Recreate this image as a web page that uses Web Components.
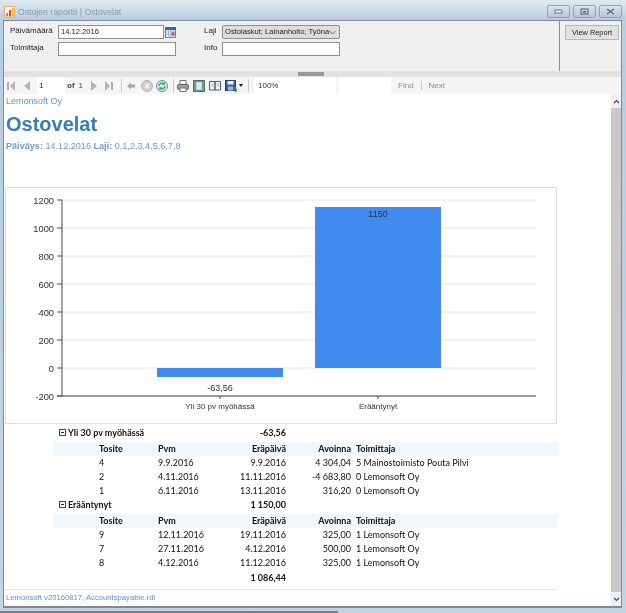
<!DOCTYPE html>
<html lang="fi">
<head>
<meta charset="utf-8">
<title>Ostojen raportit | Ostovelat</title>
<style>
  html, body { margin: 0; padding: 0; background: #c3d4e4; }
  body { width: 626px; height: 613px; overflow: hidden; font-family: "Liberation Sans", Arial, sans-serif; }
</style>
</head>
<body>
<app-window caption="Ostojen raportit | Ostovelat">
  <param-panel slot="params"></param-panel>
  <report-toolbar slot="toolbar"></report-toolbar>
  <report-page slot="content">
    <report-chart></report-chart>
    <report-group name="Yli 30 pv myöhässä" amount="-63,56">
      <report-row tosite="4" pvm="9.9.2016" era="9.9.2016" avoinna="4 304,04" toimittaja="5 Mainostoimisto Pouta Pilvi"></report-row>
      <report-row tosite="2" pvm="4.11.2016" era="11.11.2016" avoinna="-4 683,80" toimittaja="0 Lemonsoft Oy"></report-row>
      <report-row tosite="1" pvm="6.11.2016" era="13.11.2016" avoinna="316,20" toimittaja="0 Lemonsoft Oy"></report-row>
    </report-group>
    <report-group name="Erääntynyt" amount="1 150,00">
      <report-row tosite="9" pvm="12.11.2016" era="19.11.2016" avoinna="325,00" toimittaja="1 Lemonsoft Oy"></report-row>
      <report-row tosite="7" pvm="27.11.2016" era="4.12.2016" avoinna="500,00" toimittaja="1 Lemonsoft Oy"></report-row>
      <report-row tosite="8" pvm="4.12.2016" era="11.12.2016" avoinna="325,00" toimittaja="1 Lemonsoft Oy"></report-row>
    </report-group>
    <report-row total era="1 086,44"></report-row>
  </report-page>
</app-window>

<script>
// shared cell layout for the table rows, x positions follow the report columns
const ROW_GRID = `
  display: grid;
  box-sizing: border-box;
  grid-template-columns: 59px 60px 68px 65px 1fr;
  width: 505px;
  margin-left: 48px;
  padding-left: 46px;
  height: 14px;
  line-height: 14px;
  font-family: Lato, "Open Sans", sans-serif;
  font-size: 9px;
  color: #111;
  white-space: nowrap;
`;

class AppWindow extends HTMLElement {
  constructor() {
    super();
    this.attachShadow({ mode: "open" });
  }

  connectedCallback() {
    const caption = this.getAttribute("caption") || "";
    this.shadowRoot.innerHTML = `
      <style>
        :host { display: flex; flex-direction: column; width: 626px; height: 613px; background: linear-gradient(#dfe9f2, #b9cde0 20px, #c3d4e4); filter: blur(.3px); }
        .title { height: 20px; display: flex; align-items: flex-start; flex: none; }
        .icon { margin: 6px 0 0 4px; width: 11px; height: 12px; }
        .caption { margin: 7px 0 0 3px; font: 8.7px/11px "Liberation Sans", sans-serif; color: #8b9aa8; }
        .buttons { margin: 5px 4px 0 auto; display: flex; gap: 3px; }
        .buttons span { width: 21px; height: 11px; border: 1px solid #8fa3b6; border-radius: 2px; background: linear-gradient(#dbe6f0, #b4c6d8); display: flex; align-items: center; justify-content: center; }
        .frame { margin: 0 4px 0 3px; height: 588px; flex: none; display: flex; flex-direction: column; border: 1px solid #7f8a94; border-width: 1px 1px 2px 1px; background: #f0f0f0; box-sizing: border-box; }
        .split { height: 6px; flex: none; background: #e2e2e2; display: flex; justify-content: center; }
        .split i { display: block; width: 26px; height: 4px; margin: 1px 0 0 -4px; background: #9a9a9a; }
        .main { flex: 1; min-height: 0; display: flex; background: #fff; }
        .bar { width: 10px; flex: none; display: flex; flex-direction: column; background: #f0f0f0; }
        .arrow { height: 14px; flex: none; display: flex; align-items: center; justify-content: center; }
        .thumb { flex: 1; background: #c8c8c8; }
        .scrollpage { flex: 1; min-width: 0; }
        .task { margin-top: auto; width: 338px; height: 2px; background: #7b7f84; flex: none; }
      </style>
      <div class="title">
        <svg class="icon" viewBox="0 0 11 12">
          <rect x=".5" y=".5" width="10" height="11" fill="#fdf6ea" stroke="#e2b27a"/>
          <rect x="2" y="7" width="2" height="3.5" fill="#e8833a"/>
          <rect x="5" y="4" width="2" height="6.5" fill="#d9483b"/>
          <rect x="8" y="2" width="1.6" height="8.5" fill="#e6b422"/>
        </svg>
        <span class="caption">${caption}</span>
        <div class="buttons">
          <span><svg width="9" height="5"><rect x="1" y="1" width="7" height="3" fill="#eef3f8" stroke="#4b5b6a" stroke-width=".8"/></svg></span>
          <span><svg width="9" height="7"><rect x="1" y="1" width="7" height="5" fill="none" stroke="#4b5b6a"/><rect x="3" y="3" width="3" height="1.5" fill="#4b5b6a"/></svg></span>
          <span><svg width="9" height="7"><path d="M1 1l7 5M8 1L1 6" stroke="#5b6b7a" stroke-width="1.4"/></svg></span>
        </div>
      </div>
      <div class="frame">
        <slot name="params"></slot>
        <div class="split"><i></i></div>
        <slot name="toolbar"></slot>
        <div class="main">
          <div class="scrollpage"><slot name="content"></slot></div>
          <div class="bar">
            <div class="arrow"><svg width="7" height="5"><path d="M1 4l2.5-2.5L6 4" fill="none" stroke="#444" stroke-width="1.2"/></svg></div>
            <div class="thumb"></div>
            <div class="arrow"><svg width="7" height="5"><path d="M1 1l2.5 2.5L6 1" fill="none" stroke="#444" stroke-width="1.2"/></svg></div>
          </div>
        </div>
      </div>
      <div class="task"></div>
    `;
  }
}

class ParamPanel extends HTMLElement {
  constructor() {
    super();
    this.attachShadow({ mode: "open" });
  }

  connectedCallback() {
    this.shadowRoot.innerHTML = `
      <style>
        :host { display: flex; height: 50px; flex: none; background: #f0f0f0; font: 8px/12px "Liberation Sans", sans-serif; color: #222; }
        .fields { width: 556px; flex: none; box-sizing: border-box; padding: 4px 0 0 6px; display: grid; grid-template-columns: 48px 118px 28px 18px 118px; grid-template-rows: 14px 14px; row-gap: 3px; align-content: start; border-right: 1px solid #8d8d8d; }
        label { line-height: 11px; }
        .box { box-sizing: border-box; height: 14px; border: 1px solid #8e8e8e; background: #fff; padding-left: 2px; line-height: 12px; white-space: nowrap; overflow: hidden; font-size: 7.6px; }
        .date { display: flex; gap: 1px; align-items: center; }
        .date .box { width: 106px; flex: none; }
        .select { background: #dedede; border-radius: 2px; display: flex; align-items: center; justify-content: space-between; padding-right: 3px; }
        .select span { overflow: hidden; }
        .spacer { display: block; }
        .side { flex: 1; padding: 4px 0 0 5px; }
        .view { box-sizing: border-box; width: 54px; height: 15px; border: 1px solid #b5b5b5; background: #e2e2e2; text-align: center; line-height: 13px; font-size: 7.4px; }
      </style>
      <div class="fields">
        <label>Päivämäärä</label>
        <div class="date">
          <div class="box">14.12.2016</div>
          <svg width="11" height="11" viewBox="0 0 11 11">
            <rect x=".5" y=".5" width="10" height="10" fill="#e9eef6" stroke="#5f7fb5"/>
            <rect x="0" y="0" width="11" height="3" fill="#3b62a8"/>
            <path d="M1 5h9M1 7.500h9M3.500 3v8M6 3v8M8.500 3v8" stroke="#8fa6cf" stroke-width=".7"/>
            <rect x="6.500" y="5.500" width="3" height="3" fill="#d8463c"/>
          </svg>
        </div>
        <span class="spacer"></span>
        <label>Laji</label>
        <div class="box select"><span>Ostolaskut; Lainanhoito; Työna</span>
          <svg width="7" height="5" style="flex:none"><path d="M.5 1l3 3 3-3" fill="none" stroke="#666"/></svg>
        </div>
        <label>Toimittaja</label>
        <div class="box"></div>
        <span class="spacer"></span>
        <label>Info</label>
        <div class="box"></div>
      </div>
      <div class="side"><div class="view">View Report</div></div>
    `;
  }
}

class ReportToolbar extends HTMLElement {
  constructor() {
    super();
    this.attachShadow({ mode: "open" });
  }

  connectedCallback() {
    this.shadowRoot.innerHTML = `
      <style>
        :host { display: flex; align-items: center; height: 17px; flex: none; background: #f5f5f5; font: 8px/17px "Liberation Sans", sans-serif; color: #333; white-space: nowrap; padding-left: 2px; }
        svg { display: block; flex: none; }
        .page { width: 28px; height: 17px; background: #fff; padding-left: 2px; box-sizing: border-box; margin: 0 2px 0 7px; color: #222; }
        .sep { width: 1px; height: 13px; background: #c9c9c9; flex: none; }
        .zoom { width: 82px; height: 17px; box-sizing: border-box; background: #fff; padding-left: 4px; margin: 0 3px 0 5px; }
        .blank { width: 52px; height: 17px; background: #fff; }
        .link { color: #8a8a8a; }
      </style>
      <svg width="8" height="10" style="margin-left:1px"><rect x="0" y="1" width="2" height="8" fill="#b0b0b0"/><path d="M8 0v10L3 5z" fill="#b4b4b4"/></svg>
      <svg width="6" height="10" style="margin-left:9px"><path d="M6 0v10L0 5z" fill="#b4b4b4"/></svg>
      <div class="page">1</div>
      <b style="color:#444">of</b>
      <span style="margin-left:4px;color:#444">1</span>
      <svg width="6" height="10" style="margin-left:8px"><path d="M0 0v10l6-5z" fill="#b4b4b4"/></svg>
      <svg width="8" height="10" style="margin-left:8px"><path d="M0 0v10l5-5z" fill="#b4b4b4"/><rect x="6" y="1" width="2" height="8" fill="#b0b0b0"/></svg>
      <div class="sep" style="margin-left:8px"></div>
      <svg width="8" height="8" style="margin-left:5px"><path d="M0 4l4-3.500V2.500h4v3H4v2z" fill="#a9a9a9"/></svg>
      <svg width="12" height="12" style="margin-left:6px"><circle cx="6" cy="6" r="5.500" fill="#cfcfcf" stroke="#b5b5b5"/><path d="M4 4l4 4M8 4L4 8" stroke="#f5f5f5" stroke-width="1.300"/></svg>
      <svg width="12" height="12" style="margin-left:3px"><circle cx="6" cy="6" r="5.500" fill="#d6e8f2" stroke="#5d93b8"/><path d="M3 6a3 3 0 0 1 5-2.200M9 6a3 3 0 0 1-5 2.200" fill="none" stroke="#3fa14a" stroke-width="1.300"/><path d="M8.800 1.800v3h-3zM3.200 10.200v-3h3z" fill="#3fa14a"/></svg>
      <div class="sep" style="margin-left:5px"></div>
      <svg width="12" height="12" style="margin-left:3px"><rect x="3" y="0.500" width="6" height="4" fill="#fff" stroke="#777"/><rect x="0.500" y="4.500" width="11" height="5" rx="1" fill="#9a9fa6" stroke="#666"/><rect x="3" y="8" width="6" height="3.500" fill="#fff" stroke="#777"/></svg>
      <svg width="12" height="12" style="margin-left:4px"><rect x=".5" y=".5" width="11" height="11" fill="#6d9c88" stroke="#4d6f63"/><rect x="3" y="2" width="6" height="8" fill="#dfe9f5" stroke="#7d97b8" stroke-width=".6"/></svg>
      <svg width="12" height="11" style="margin-left:4px"><path d="M.5 1.500h5.500v8.500H.5zM6 1.500h5.500v8.500H6z" fill="#f4f4f4" stroke="#56606c"/><path d="M2 4h3M2 6h3M7.500 4h3M7.500 6h3" stroke="#9ab" stroke-width=".7"/></svg>
      <svg width="13" height="12" style="margin-left:4px"><rect x=".5" y=".5" width="10" height="10" fill="#3a5ea8" stroke="#273f78"/><rect x="2.500" y="1" width="6" height="3.500" fill="#e8eef8"/><rect x="3" y="6.500" width="5" height="4" fill="#9fb4d8"/><path d="M10.500 7v3M9 9l1.500 2.500L12 9" fill="none" stroke="#2f9a3c" stroke-width="1.400"/></svg>
      <svg width="4" height="3" style="margin-left:1px"><path d="M0 0h4L2 3z" fill="#222"/></svg>
      <div class="sep" style="margin-left:5px"></div>
      <div class="zoom">100%</div>
      <div class="blank"></div>
      <span class="link" style="margin-left:7px">Find</span>
      <span class="sep" style="margin-left:7px;height:9px"></span>
      <span class="link" style="margin-left:7px">Next</span>
    `;
  }
}

class ReportPage extends HTMLElement {
  constructor() {
    super();
    this.attachShadow({ mode: "open" });
  }

  connectedCallback() {
    this.shadowRoot.innerHTML = `
      <style>
        :host { display: flex; flex-direction: column; height: 100%; font-family: "Liberation Sans", Arial, sans-serif; color: #5b8fc4; }
        .company { font-size: 9px; line-height: 12px; margin: 1px 0 0 2px; color: #5f93c6; }
        h1 { margin: 5px 0 0 2px; font-size: 20px; line-height: 24px; font-weight: bold; color: #3a7cb8; }
        .info { margin: 4px 0 0 2px; font-size: 9.1px; line-height: 12px; color: #6a9ccd; }
        .chart { margin: 35px 0 0 1px; }
        .foot { margin-top: auto; height: 17px; border-top: 1px solid #f2eaa8; width: 553px; box-sizing: border-box; padding: 2px 0 0 2px; font-size: 7.7px; line-height: 12px; color: #5f93c6; }
      </style>
      <div class="company">Lemonsoft Oy</div>
      <h1>Ostovelat</h1>
      <div class="info"><b>Päiväys:</b> 14.12.2016 <b>Laji:</b> 0,1,2,3,4,5,6,7,8</div>
      <div class="chart"><slot></slot></div>
      <div class="foot">Lemonsoft v20160817, Accountspayable.rdl</div>
    `;
  }
}

class ReportChart extends HTMLElement {
  constructor() {
    super();
    this.attachShadow({ mode: "open" });
  }

  connectedCallback() {
    const yOf = (v) => 368 - v * 0.14;
    const ticks = [1200, 1000, 800, 600, 400, 200, 0, -200];
    const grid = ticks.map((t) => `
      <line x1="62" x2="536" y1="${yOf(t)}" y2="${yOf(t)}" stroke="#e4e4e4"/>
      <line x1="57" x2="62" y1="${yOf(t)}" y2="${yOf(t)}" stroke="#444"/>
      <text x="54" y="${yOf(t) + 3.5}" text-anchor="end" font-size="9.3">${t}</text>
    `).join("");

    this.shadowRoot.innerHTML = `
      <style>
        :host { display: block; width: 552px; height: 237px; margin-bottom: 2px; }
        svg { display: block; font-family: "Liberation Sans", Arial, sans-serif; fill: #333; }
      </style>
      <svg width="552" height="237" viewBox="5 187 552 237">
        <rect x="5.500" y="187.500" width="551" height="236" fill="#fff" stroke="#dcdcdc"/>
        ${grid}
        <rect x="157" y="${yOf(0)}" width="126" height="9" fill="#3f8bee"/>
        <rect x="315" y="${yOf(1150)}" width="126" height="161" fill="#3f8bee"/>
        <line x1="62" x2="62" y1="200" y2="396" stroke="#444"/>
        <line x1="57" x2="536" y1="396" y2="396" stroke="#444"/>
        <line x1="220" x2="220" y1="396" y2="399" stroke="#444"/>
        <line x1="378" x2="378" y1="396" y2="399" stroke="#444"/>
        <text x="378" y="217" text-anchor="middle" font-size="9">1150</text>
        <text x="220" y="391" text-anchor="middle" font-size="9">-63,56</text>
        <text x="220" y="409" text-anchor="middle" font-size="8">Yli 30 pv myöhässä</text>
        <text x="378" y="409" text-anchor="middle" font-size="8">Erääntynyt</text>
      </svg>
    `;
  }
}

class ReportGroup extends HTMLElement {
  constructor() {
    super();
    this.attachShadow({ mode: "open" });
  }

  connectedCallback() {
    const name = this.getAttribute("name") || "";
    const amount = this.getAttribute("amount") || "";
    this.shadowRoot.innerHTML = `
      <style>
        :host { display: block; }
        .group { ${ROW_GRID} height: 16px; padding-left: 6px; grid-template-columns: 140px 87px; font-weight: bold; }
        .label { display: flex; align-items: flex-start; }
        .label svg { margin: 3px 1px 0 0; flex: none; }
        .amount { text-align: right; }
        .head { ${ROW_GRID} background: #f0f7fd; font-weight: bold; }
        .r { text-align: right; }
        .s { padding-left: 5px; }
      </style>
      <div class="group">
        <div class="label">
          <svg width="8" height="8"><rect x=".5" y=".5" width="6" height="6" fill="#fff" stroke="#444"/><path d="M2 3.500h3" stroke="#222"/></svg>
          <span>${name}</span>
        </div>
        <div class="amount">${amount}</div>
      </div>
      <div class="head">
        <span>Tosite</span><span>Pvm</span><span class="r">Eräpäivä</span><span class="r">Avoinna</span><span class="s">Toimittaja</span>
      </div>
      <slot></slot>
    `;
  }
}

class ReportRow extends HTMLElement {
  constructor() {
    super();
    this.attachShadow({ mode: "open" });
  }

  connectedCallback() {
    const get = (n) => this.getAttribute(n) || "";
    const total = this.hasAttribute("total");
    this.shadowRoot.innerHTML = `
      <style>
        :host { display: block; ${total ? "margin-top: 1px;" : ""} }
        .row { ${ROW_GRID} ${total ? "font-weight: bold;" : ""} }
        .r { text-align: right; }
        .s { padding-left: 5px; }
      </style>
      <div class="row">
        <span>${get("tosite")}</span><span>${get("pvm")}</span>
        <span class="r">${get("era")}</span><span class="r">${get("avoinna")}</span>
        <span class="s">${get("toimittaja")}</span>
      </div>
    `;
  }
}

customElements.define("app-window", AppWindow);
customElements.define("param-panel", ParamPanel);
customElements.define("report-toolbar", ReportToolbar);
customElements.define("report-page", ReportPage);
customElements.define("report-chart", ReportChart);
customElements.define("report-group", ReportGroup);
customElements.define("report-row", ReportRow);
</script>
</body>
</html>
